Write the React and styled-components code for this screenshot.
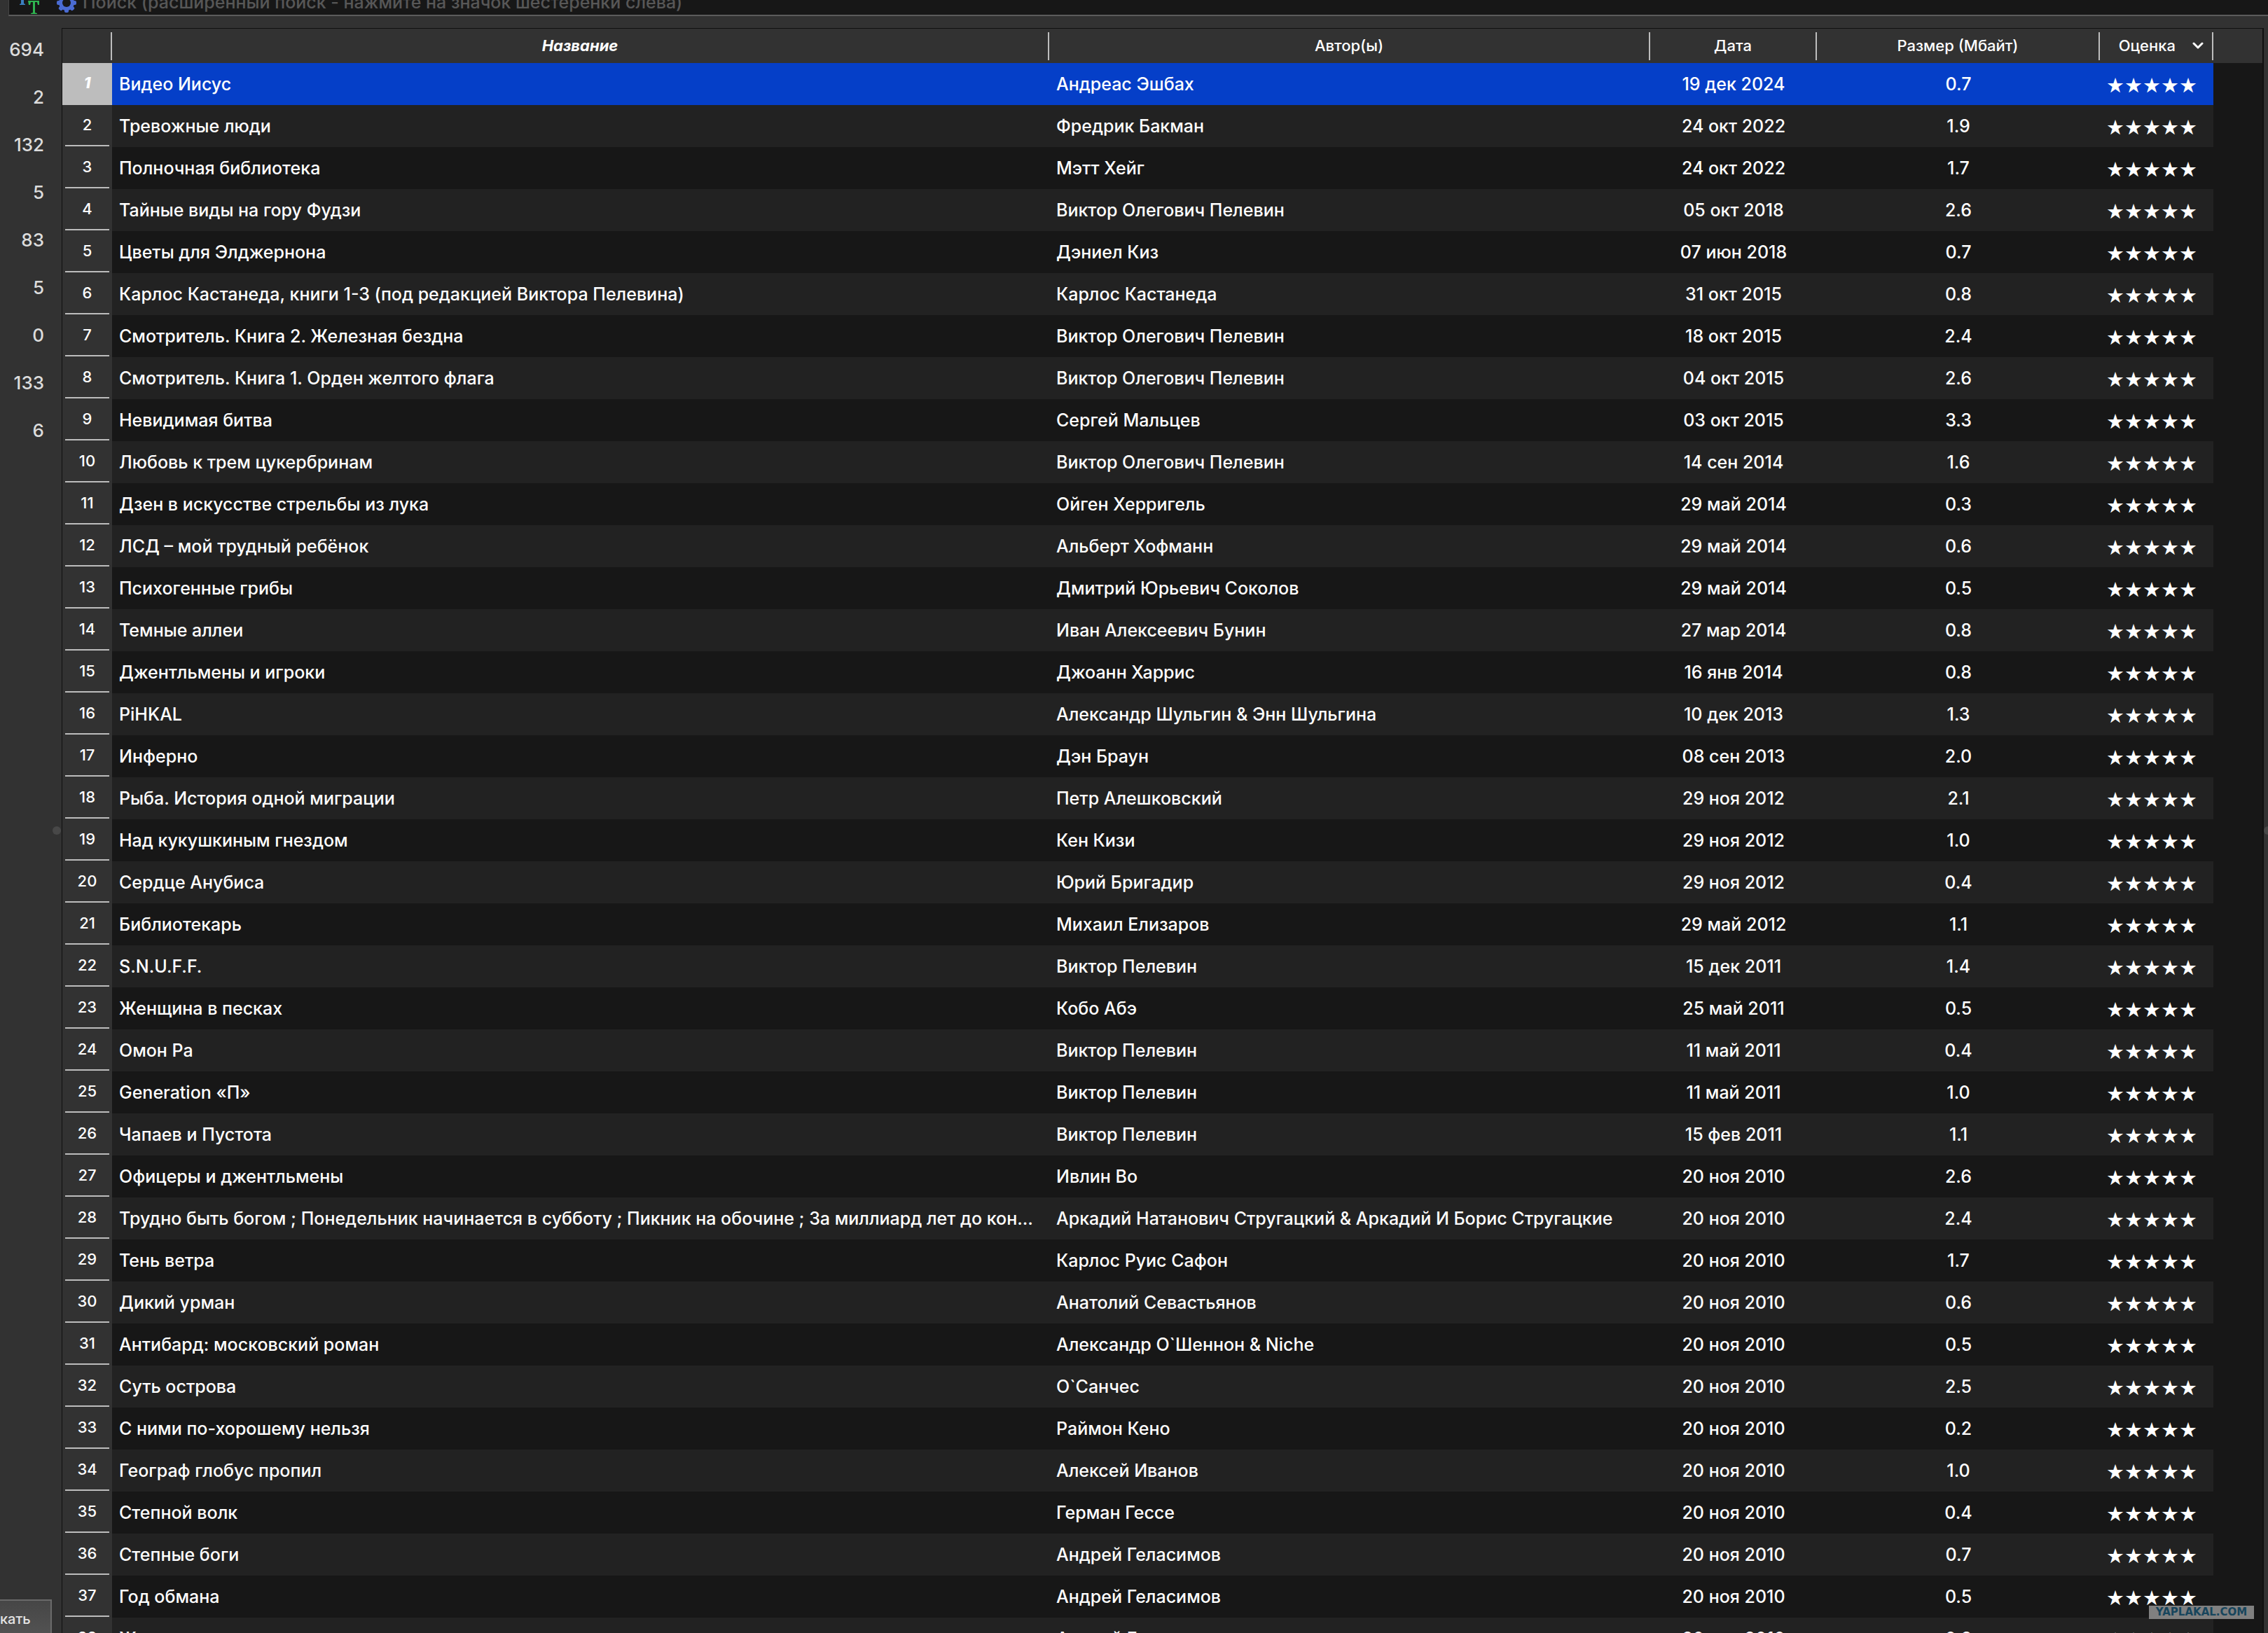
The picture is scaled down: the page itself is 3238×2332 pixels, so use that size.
import React from 'react';
import styled, { createGlobalStyle, css } from 'styled-components';

const font = 'Inter, "Noto Sans", "DejaVu Sans", sans-serif';

const GlobalStyle = createGlobalStyle`
  * { box-sizing: border-box; }
  body { margin: 0; background: #323232; overflow: hidden; }
`;

const Window = styled.div`
  height: 100vh;
  display: flex;
  flex-direction: column;
  overflow: hidden;
  background: #323232;
  color: #fff;
  font-family: ${font};
  font-size: 25px;
  font-weight: 500;
  line-height: 32px;
`;

const SearchBar = styled.form`
  flex: none;
  height: 23px;
  margin-left: 12px;
  padding-left: 12px;
  display: flex;
  align-items: flex-end;
  overflow: hidden;
  background: #171717;
  border-left: 1px solid #444;
  border-bottom: 2px solid #5c5c5c;
`;

const IconButton = styled.button`
  flex: none;
  height: 40px;
  margin-right: ${(p) => p.$gap}px;
  padding: 0;
  border: 0;
  background: none;
  svg { display: block; }
`;

const SearchInput = styled.input`
  flex: 1;
  height: 36px;
  padding: 0;
  border: 0;
  outline: 0;
  background: none;
  color: #fff;
  font: 500 25px ${font};
  &::placeholder { color: #575757; opacity: 1; }
`;

const Main = styled.div`
  flex: 1;
  min-height: 0;
  display: flex;
  margin-top: 17px;
`;

const Sidebar = styled.aside`
  flex: none;
  width: 74px;
  display: flex;
  flex-direction: column;
  justify-content: space-between;
`;

const Counts = styled.ul`
  margin: 0;
  padding: 14px 11px 0 0;
  list-style: none;
  color: #dcdcdc;
  font-size: 26px;
  text-align: right;
  li { height: 68px; line-height: 34px; }
`;

const SearchButton = styled.button`
  height: 48px;
  padding: 5px 0 0;
  border: 0 solid #6a6a6a;
  border-top-width: 2px;
  border-right-width: 2px;
  background: linear-gradient(#464646, #525252);
  color: #e4e4e4;
  font: 500 20px ${font};
  text-align: left;
`;

const Splitter = styled.div`
  flex: none;
  width: ${(p) => p.$width}px;
  display: flex;
  align-items: center;
  justify-content: ${(p) => p.$align || 'center'};
  overflow: hidden;
  &::before {
    content: '';
    flex: none;
    width: 12px;
    height: 12px;
    border-radius: 6px;
    background: #484848;
  }
`;

const TableFrame = styled.main`
  flex: 1;
  min-width: 0;
  overflow: hidden;
  border: 1px solid #101010;
  border-bottom: 0;
  border-right-width: 2px;
  background: #171717;
`;

const Table = styled.table`
  width: 100%;
  table-layout: fixed;
  border-collapse: collapse;
`;

const HeadCell = styled.th`
  height: 49px;
  padding: 0;
  background: #323232;
  font-size: 22px;
  font-weight: 500;
`;

const HeadLabel = styled.div`
  height: 40px;
  display: flex;
  align-items: center;
  justify-content: center;
  gap: 24px;
  padding-bottom: 2px;
  border-right: ${(p) => (p.$last ? '0' : '2px solid #bdbdbd')};
  ${(p) => p.$primary && css`
    font-weight: 700;
    font-style: italic;
  `}
  ${(p) => p.$sorted && css`
    justify-content: flex-end;
    padding-right: 12px;
  `}
`;

const IndexCell = styled.th`
  padding: 0 4px;
  background: ${(p) => (p.$selected ? '#bdbdbd' : '#323232')};
  font-size: 22px;
  font-weight: ${(p) => (p.$selected ? 800 : 500)};
  font-style: ${(p) => (p.$selected ? 'italic' : 'normal')};
`;

const IndexLabel = styled.div`
  height: 59px;
  margin-bottom: 1px;
  line-height: 56px;
  border-bottom: 2px solid #bdbdbd;
`;

const Cell = styled.td`
  height: 60px;
  padding: ${(p) => (p.$rating ? '4px 0 0 9px' : '0 10px')};
  overflow: hidden;
  text-overflow: ellipsis;
  white-space: nowrap;
  text-align: ${(p) => p.$align || 'left'};
`;

const Filler = styled.td`
  background: #171717;
`;

const Row = styled.tr`
  background: #171717;
  &:nth-child(even) { background: #222; }
  ${(p) => p.$selected && css`
    background: #053fc8;
    ${IndexLabel} { border-color: transparent; }
  `}
`;

const Stars = styled.span`
  font-family: "DejaVu Sans", sans-serif;
  font-size: 29px;
  line-height: 32px;
`;

const Watermark = styled.div`
  position: absolute;
  right: 20px;
  bottom: 20px;
  width: 150px;
  height: 19px;
  background: rgba(140, 140, 140, 0.9);
  color: #17455c;
  font: 700 15px/19px "DejaVu Sans", sans-serif;
  text-align: center;
`;

const counts = [694, 2, 132, 5, 83, 5, 0, 133, 6];

const books = [
  ['Видео Иисус', 'Андреас Эшбах', '19 дек 2024', '0.7'],
  ['Тревожные люди', 'Фредрик Бакман', '24 окт 2022', '1.9'],
  ['Полночная библиотека', 'Мэтт Хейг', '24 окт 2022', '1.7'],
  ['Тайные виды на гору Фудзи', 'Виктор Олегович Пелевин', '05 окт 2018', '2.6'],
  ['Цветы для Элджернона', 'Дэниел Киз', '07 июн 2018', '0.7'],
  ['Карлос Кастанеда, книги 1-3 (под редакцией Виктора Пелевина)', 'Карлос Кастанеда', '31 окт 2015', '0.8'],
  ['Смотритель. Книга 2. Железная бездна', 'Виктор Олегович Пелевин', '18 окт 2015', '2.4'],
  ['Смотритель. Книга 1. Орден желтого флага', 'Виктор Олегович Пелевин', '04 окт 2015', '2.6'],
  ['Невидимая битва', 'Сергей Мальцев', '03 окт 2015', '3.3'],
  ['Любовь к трем цукербринам', 'Виктор Олегович Пелевин', '14 сен 2014', '1.6'],
  ['Дзен в искусстве стрельбы из лука', 'Ойген Херригель', '29 май 2014', '0.3'],
  ['ЛСД – мой трудный ребёнок', 'Альберт Хофманн', '29 май 2014', '0.6'],
  ['Психогенные грибы', 'Дмитрий Юрьевич Соколов', '29 май 2014', '0.5'],
  ['Темные аллеи', 'Иван Алексеевич Бунин', '27 мар 2014', '0.8'],
  ['Джентльмены и игроки', 'Джоанн Харрис', '16 янв 2014', '0.8'],
  ['PiHKAL', 'Александр Шульгин & Энн Шульгина', '10 дек 2013', '1.3'],
  ['Инферно', 'Дэн Браун', '08 сен 2013', '2.0'],
  ['Рыба. История одной миграции', 'Петр Алешковский', '29 ноя 2012', '2.1'],
  ['Над кукушкиным гнездом', 'Кен Кизи', '29 ноя 2012', '1.0'],
  ['Сердце Анубиса', 'Юрий Бригадир', '29 ноя 2012', '0.4'],
  ['Библиотекарь', 'Михаил Елизаров', '29 май 2012', '1.1'],
  ['S.N.U.F.F.', 'Виктор Пелевин', '15 дек 2011', '1.4'],
  ['Женщина в песках', 'Кобо Абэ', '25 май 2011', '0.5'],
  ['Омон Ра', 'Виктор Пелевин', '11 май 2011', '0.4'],
  ['Generation «П»', 'Виктор Пелевин', '11 май 2011', '1.0'],
  ['Чапаев и Пустота', 'Виктор Пелевин', '15 фев 2011', '1.1'],
  ['Офицеры и джентльмены', 'Ивлин Во', '20 ноя 2010', '2.6'],
  ['Трудно быть богом ; Понедельник начинается в субботу ; Пикник на обочине ; За миллиард лет до кон...', 'Аркадий Натанович Стругацкий & Аркадий И Борис Стругацкие', '20 ноя 2010', '2.4'],
  ['Тень ветра', 'Карлос Руис Сафон', '20 ноя 2010', '1.7'],
  ['Дикий урман', 'Анатолий Севастьянов', '20 ноя 2010', '0.6'],
  ['Антибард: московский роман', 'Александр О`Шеннон & Niche', '20 ноя 2010', '0.5'],
  ['Суть острова', 'О`Санчес', '20 ноя 2010', '2.5'],
  ['С ними по-хорошему нельзя', 'Раймон Кено', '20 ноя 2010', '0.2'],
  ['Географ глобус пропил', 'Алексей Иванов', '20 ноя 2010', '1.0'],
  ['Степной волк', 'Герман Гессе', '20 ноя 2010', '0.4'],
  ['Степные боги', 'Андрей Геласимов', '20 ноя 2010', '0.7'],
  ['Год обмана', 'Андрей Геласимов', '20 ноя 2010', '0.5'],
  ['Жажда', 'Андрей Геласимов', '20 ноя 2010', '0.2'],
];

const TextIcon = () => (
  <svg width="32" height="40" viewBox="0 0 32 40">
    <path d="M0 8h14v5h-1l-1-3H9v14l2 1v1H3v-1l2-1V10H2l-1 3H0z" fill="#3b7fc0" />
    <path d="M15 20h16v6h-2l-1-4h-3v15l3 1v1h-9v-1l3-1V22h-3l-1 4h-2z" fill="#2fb350" />
  </svg>
);

const GearIcon = () => (
  <svg width="28" height="40" viewBox="0 0 28 40">
    <g fill="#4a6bd2">
      {[0, 45, 90, 135].map((a) => (
        <rect key={a} x="11" y="9" width="6" height="28" rx="2" transform={`rotate(${a} 14 23)`} />
      ))}
      <circle cx="14" cy="23" r="11" />
    </g>
    <circle cx="14" cy="23" r="6" fill="#171717" />
  </svg>
);

const Chevron = () => (
  <svg width="16" height="10" viewBox="0 0 16 10" fill="none" stroke="#fff" strokeWidth="3" strokeLinecap="round" strokeLinejoin="round">
    <path d="M2 2l6 6 6-6" />
  </svg>
);

export default function App() {
  return (
    <>
      <GlobalStyle />
      <Window>
        <SearchBar>
          <IconButton $gap={24} type="button" aria-label="Полнотекстовый поиск"><TextIcon /></IconButton>
          <IconButton $gap={9} type="button" aria-label="Расширенный поиск"><GearIcon /></IconButton>
          <SearchInput aria-label="Поиск" placeholder="Поиск (расширенный поиск - нажмите на значок шестеренки слева)" />
        </SearchBar>
        <Main>
          <Sidebar>
            <Counts>{counts.map((n, i) => <li key={i}>{n}</li>)}</Counts>
            <SearchButton type="button">кать</SearchButton>
          </Sidebar>
          <Splitter $width={14} />
          <TableFrame>
            <Table>
              <colgroup>
                <col style={{ width: 71 }} />
                <col />
                <col style={{ width: 858 }} />
                <col style={{ width: 238 }} />
                <col style={{ width: 404 }} />
                <col style={{ width: 162 }} />
                <col style={{ width: 70 }} />
              </colgroup>
              <thead>
                <tr>
                  <HeadCell><HeadLabel /></HeadCell>
                  <HeadCell><HeadLabel $primary>Название</HeadLabel></HeadCell>
                  <HeadCell><HeadLabel>Автор(ы)</HeadLabel></HeadCell>
                  <HeadCell><HeadLabel>Дата</HeadLabel></HeadCell>
                  <HeadCell><HeadLabel>Размер (Мбайт)</HeadLabel></HeadCell>
                  <HeadCell><HeadLabel $sorted>Оценка<Chevron /></HeadLabel></HeadCell>
                  <HeadCell><HeadLabel $last /></HeadCell>
                </tr>
              </thead>
              <tbody>
                {books.map(([title, author, date, size], i) => (
                  <Row key={i} $selected={i === 0}>
                    <IndexCell scope="row" $selected={i === 0}><IndexLabel>{i + 1}</IndexLabel></IndexCell>
                    <Cell>{title}</Cell>
                    <Cell>{author}</Cell>
                    <Cell $align="center">{date}</Cell>
                    <Cell $align="center">{size}</Cell>
                    <Cell $rating><Stars>★★★★★</Stars></Cell>
                    <Filler />
                  </Row>
                ))}
              </tbody>
            </Table>
          </TableFrame>
          <Splitter $width={6} $align="flex-start" />
        </Main>
        <Watermark>YAPLAKAL.COM</Watermark>
      </Window>
    </>
  );
}
